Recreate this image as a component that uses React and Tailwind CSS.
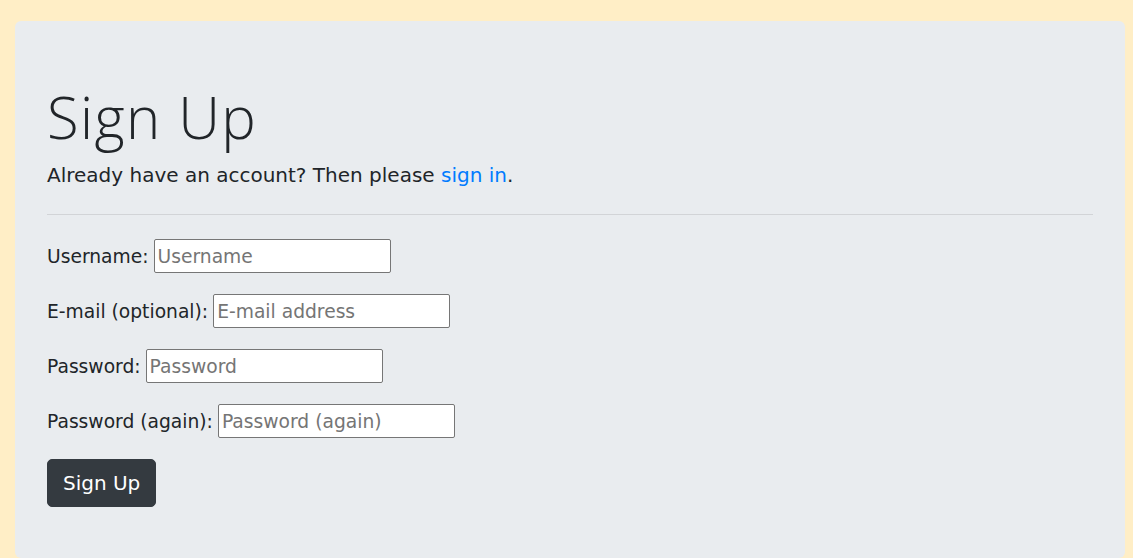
export default function App() {
  const rows = [
    { label: "Username:", ph: "Username" },
    { label: "E-mail (optional):", ph: "E-mail address" },
    { label: "Password:", ph: "Password" },
    { label: "Password (again):", ph: "Password (again)" },
  ];
  return (
    <div
      className="min-h-screen bg-[#ffeec6] pt-[21px] pl-[15px] pr-[8px] text-[#212529]"
      style={{ fontFamily: '"DejaVu Sans", "Open Sans", sans-serif' }}
    >
      <div className="bg-[#e9ecef] rounded-[6px] px-8 pt-[62px] min-h-[537px]">
        <h1
          className="text-[58px] font-light leading-[68px] tracking-[1.4px]"
          style={{ fontFamily: '"Open Sans", sans-serif' }}
        >
          Sign Up
        </h1>
        <p className="mt-[9px] text-[20px] leading-[30px]">
          Already have an account? Then please{" "}
          <a href="#" className="text-[#007bff]">sign in</a>.
        </p>
        <hr className="mt-[24px] border-0 border-t border-[#d2d4d7]" />
        <form className="mt-[24px] flex flex-col gap-[21px]">
          {rows.map((r) => (
            <div key={r.label} className="flex items-center h-[34px] text-[18.7px] leading-[27px]">
              <label className="mr-[5px]">{r.label}</label>
              <input
                type="text"
                placeholder={r.ph}
                className="w-[237px] h-[34px] bg-white border border-[#767676] rounded-[2px] px-[3px] text-[18.7px] placeholder:text-[#757575] outline-none"
              />
            </div>
          ))}
          <div>
            <button
              type="button"
              className="h-[48px] px-[15px] border border-[#343a40] bg-[#343a40] text-white text-[20px] rounded-[5px]"
            >
              Sign Up
            </button>
          </div>
        </form>
      </div>
    </div>
  );
}
